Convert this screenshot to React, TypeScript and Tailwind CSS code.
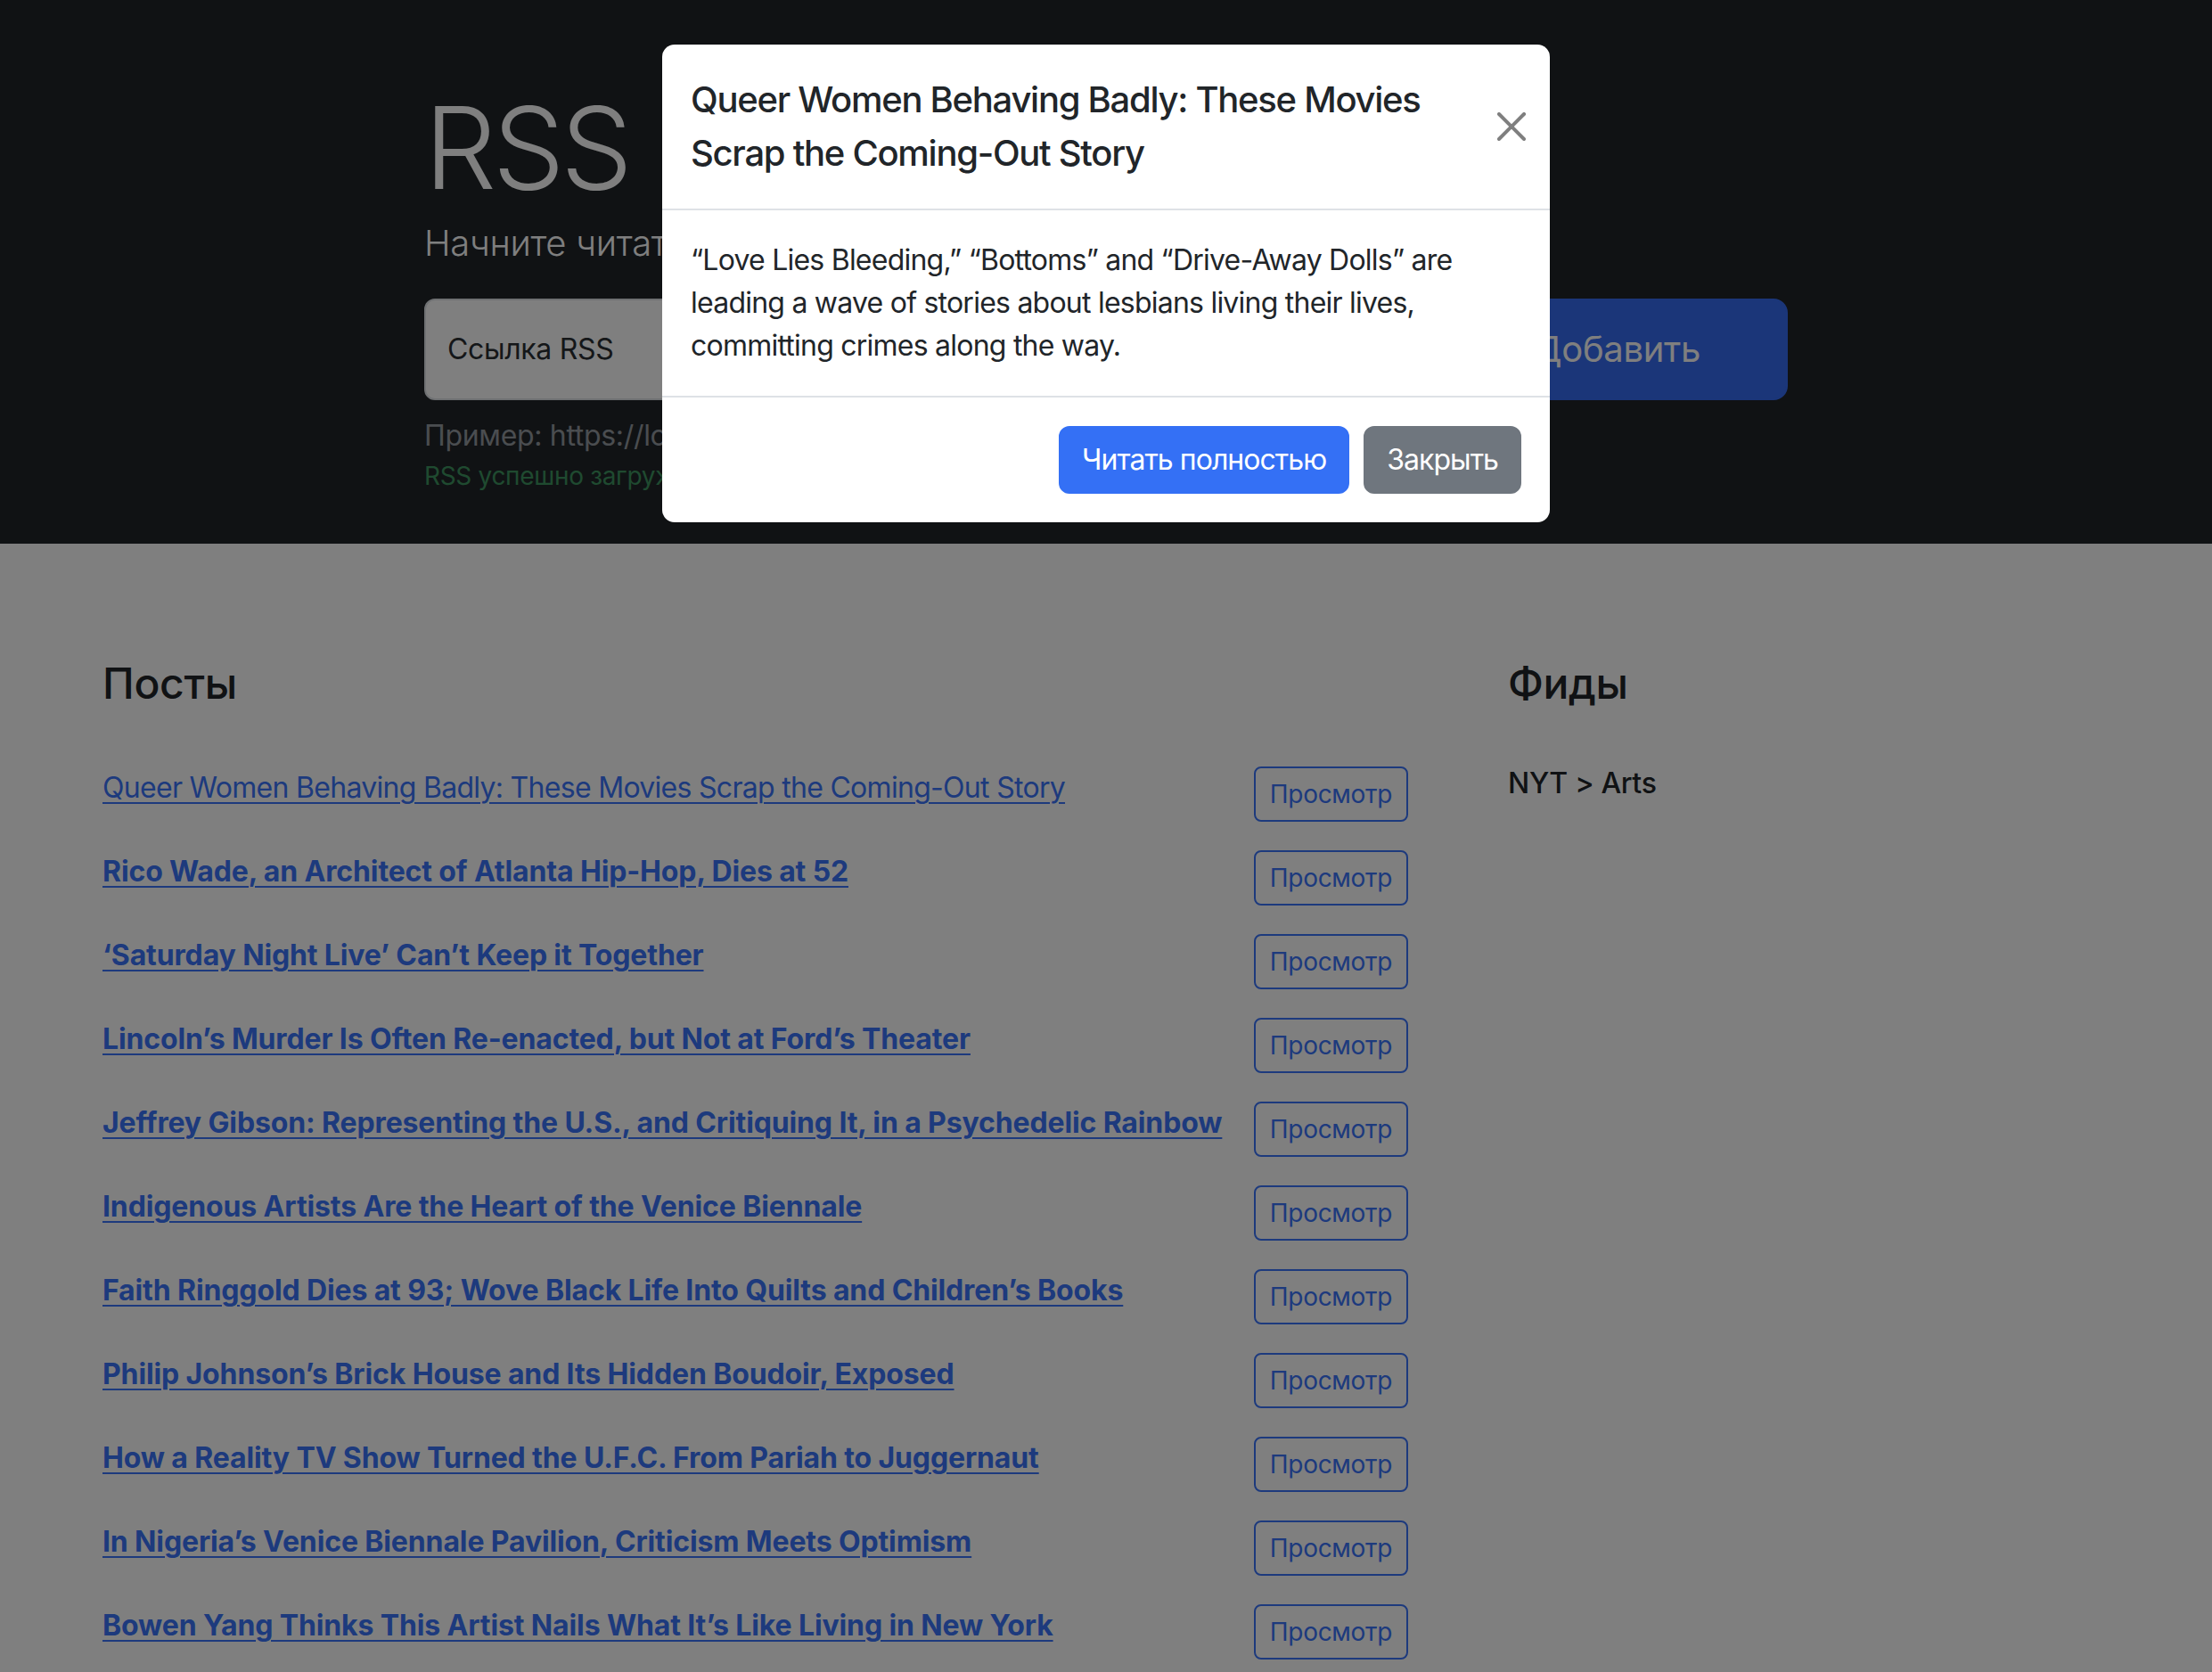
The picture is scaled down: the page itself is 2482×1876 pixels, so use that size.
import React from "react";

const posts: { title: string; read?: boolean }[] = [
  { title: "Queer Women Behaving Badly: These Movies Scrap the Coming-Out Story", read: true },
  { title: "Rico Wade, an Architect of Atlanta Hip-Hop, Dies at 52" },
  { title: "‘Saturday Night Live’ Can’t Keep it Together" },
  { title: "Lincoln’s Murder Is Often Re-enacted, but Not at Ford’s Theater" },
  { title: "Jeffrey Gibson: Representing the U.S., and Critiquing It, in a Psychedelic Rainbow" },
  { title: "Indigenous Artists Are the Heart of the Venice Biennale" },
  { title: "Faith Ringgold Dies at 93; Wove Black Life Into Quilts and Children’s Books" },
  { title: "Philip Johnson’s Brick House and Its Hidden Boudoir, Exposed" },
  { title: "How a Reality TV Show Turned the U.F.C. From Pariah to Juggernaut" },
  { title: "In Nigeria’s Venice Biennale Pavilion, Criticism Meets Optimism" },
  { title: "Bowen Yang Thinks This Artist Nails What It’s Like Living in New York" },
];

export default function App() {
  return (
    <div className="relative min-h-screen bg-white font-[Inter,sans-serif] text-[#212529] tracking-[-0.02em]">
      {/* Hero */}
      <section className="bg-[#212529] pt-[89px] pb-[55px]">
        <div className="mx-auto w-[1530px] text-white">
          <h1 className="text-[128px] leading-[154px] font-light tracking-[-0.035em] whitespace-nowrap">RSS агрегатор</h1>
          <p className="text-[40px] leading-[60px] font-light mb-[32px] whitespace-nowrap">
            Начните читать RSS сегодня! Это легко, это красиво.
          </p>
          <form className="flex gap-[48px] h-[114px]">
            <div className="flex-1 flex items-center rounded-[12px] border-2 border-[#dee2e6] bg-white pl-[24px]">
              <span className="text-[32px] leading-[48px] text-[#2b2f33]">Ссылка RSS</span>
            </div>
            <button
              type="button"
              className="h-full px-[96px] rounded-[16px] border-2 border-[#366cf2] bg-[#366cf2] text-white text-[40px] leading-[60px]"
            >
              Добавить
            </button>
          </form>
          <p className="mt-[16px] text-[32px] leading-[48px] text-[#959aa0] whitespace-nowrap">
            Пример: https://lorem-rss.hexlet.app/feed
          </p>
          <p className="text-[28px] leading-[42px] text-[#3e9460] whitespace-nowrap">RSS успешно загружен</p>
        </div>
      </section>

      {/* Content */}
      <section className="px-[83px] pt-[96px] pb-[96px] flex gap-[48px]">
        <div className="w-[1529px] shrink-0">
          <div className="p-[32px]">
            <h2 className="text-[48px] leading-[57.6px] font-medium mb-[16px]">Посты</h2>
          </div>
          <ul>
            {posts.map((p, i) => (
              <li key={i} className="flex justify-between items-start px-[32px] py-[16px]">
                <a
                  href="#"
                  className={`text-[32px] leading-[48px] text-[#3a74fb] underline decoration-2 underline-offset-[5px] whitespace-nowrap ${
                    p.read ? "font-normal tracking-[-0.022em]" : "font-bold tracking-[-0.004em]"
                  }`}
                >
                  {p.title}
                </a>
                <button
                  type="button"
                  className="shrink-0 px-[16px] py-[8px] text-[28px] leading-[42px] border-2 border-[#3a74fb] text-[#3a74fb] rounded-[8px]"
                >
                  Просмотр
                </button>
              </li>
            ))}
          </ul>
        </div>
        <div className="flex-1">
          <div className="p-[32px]">
            <h2 className="text-[48px] leading-[57.6px] font-medium mb-[16px]">Фиды</h2>
          </div>
          <ul>
            <li className="px-[32px] py-[16px]">
              <h3 className="text-[32px] leading-[38.4px] font-medium">NYT &gt; Arts</h3>
            </li>
          </ul>
        </div>
      </section>

      {/* Backdrop */}
      <div className="fixed inset-0 bg-black/50" />

      {/* Modal */}
      <div className="fixed inset-0 flex justify-center items-start">
        <div className="mt-[50px] w-[996px] rounded-[14px] bg-white">
          <div className="flex items-center gap-[21px] px-[32px] py-[32px] border-b-2 border-[#dee2e6]">
            <h5 className="flex-1 text-[40px] leading-[60px] font-medium tracking-[-0.032em] text-[#212529]">
              Queer Women Behaving Badly: These Movies Scrap the Coming-Out Story
            </h5>
            <button type="button" aria-label="Close" className="shrink-0 w-[32px] h-[32px] -mr-[5px]">
              <svg viewBox="0 0 16 16" width="32" height="32">
                <path
                  fill="#000"
                  fillOpacity="0.5"
                  d="M.293.293a1 1 0 0 1 1.414 0L8 6.586 14.293.293a1 1 0 1 1 1.414 1.414L9.414 8l6.293 6.293a1 1 0 0 1-1.414 1.414L8 9.414l-6.293 6.293a1 1 0 0 1-1.414-1.414L6.586 8 .293 1.707a1 1 0 0 1 0-1.414z"
                />
              </svg>
            </button>
          </div>
          <div className="p-[32px] text-[32px] leading-[48px] tracking-[-0.024em] text-[#212529]">
            “Love Lies Bleeding,” “Bottoms” and “Drive-Away Dolls” are leading a wave of stories about lesbians
            living their lives, committing crimes along the way.
          </div>
          <div className="flex justify-end gap-[16px] p-[32px] border-t-2 border-[#dee2e6]">
            <button
              type="button"
              className="px-[24px] py-[12px] text-[32px] leading-[48px] tracking-[-0.03em] border-2 border-[#3470f5] bg-[#3470f5] text-white rounded-[12px]"
            >
              Читать полностью
            </button>
            <button
              type="button"
              className="px-[24px] py-[12px] text-[32px] leading-[48px] tracking-[-0.03em] border-2 border-[#6f767e] bg-[#6f767e] text-white rounded-[12px]"
            >
              Закрыть
            </button>
          </div>
        </div>
      </div>
    </div>
  );
}
